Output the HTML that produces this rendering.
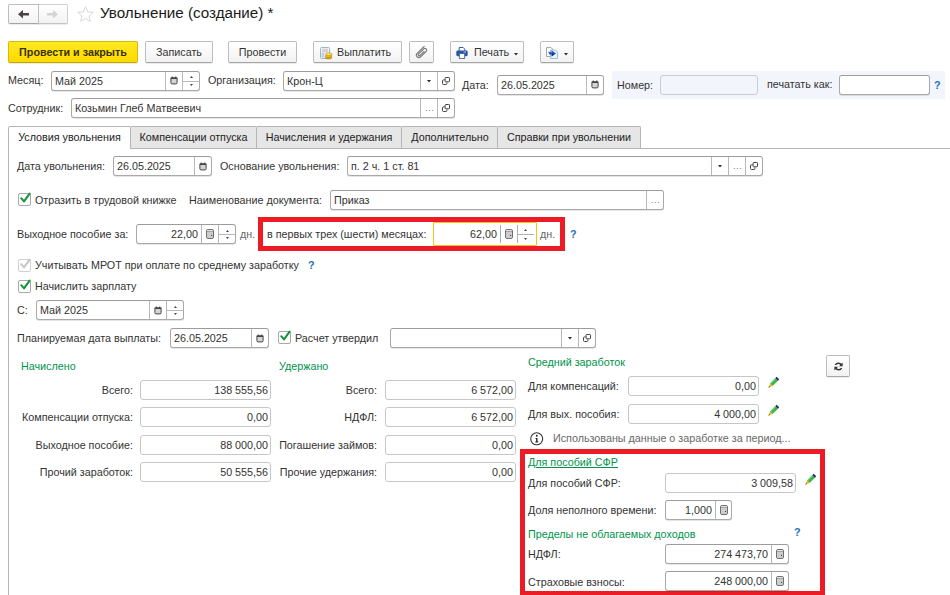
<!DOCTYPE html>
<html lang="ru">
<head>
<meta charset="utf-8">
<title>Увольнение (создание)</title>
<style>
html,body{margin:0;padding:0;background:#fff;}
body{width:950px;height:595px;overflow:hidden;position:relative;font-family:"Liberation Sans",sans-serif;font-size:10.75px;color:#333;}
.a{position:absolute;white-space:nowrap;}
.t{position:absolute;white-space:nowrap;line-height:13px;height:13px;}
.r{text-align:right;}
.g{color:#00934a;}
.q{color:#1f6fc2;font-weight:bold;margin-left:-1px;}
.f{position:absolute;box-sizing:border-box;border:1px solid #a9a9a9;border-top-color:#9c9c9c;border-radius:3px;background:#fff;height:20px;line-height:18px;white-space:nowrap;padding:0 3px;color:#333;box-shadow:0 1px 0 rgba(0,0,0,.10);}
.f.n{text-align:right;padding-right:2px;}
.f.dis{background:#f2f6fc;border-color:#c9cdd3;box-shadow:none;}
.f.ro{border-color:#c6c6c6;box-shadow:none;}
.f.act{border:1px solid #f5c400;box-shadow:0 0 0 1px #f5c400;}
.sep{position:absolute;top:0;bottom:0;width:1px;background:#b8b8b8;}
.hs{position:absolute;height:1px;background:#b8b8b8;}
.btn{position:absolute;box-sizing:border-box;height:21px;border:1px solid #bdbdbd;border-bottom-color:#a6a6a6;border-radius:2px;background:linear-gradient(#ffffff,#f2f2f2);box-shadow:0 1px 0 rgba(0,0,0,.08);line-height:19px;text-align:center;white-space:nowrap;color:#333;}
.btn.y{background:linear-gradient(#ffe920,#ffd900);border-color:#d9b900;border-bottom-color:#c3a600;font-weight:bold;color:#3a3000;}
.tab{position:absolute;box-sizing:border-box;top:126px;height:22px;border:1px solid #b5b5b5;border-bottom:none;border-left:none;background:#e6e6e6;line-height:20px;text-align:center;white-space:nowrap;border-radius:0 2px 0 0;color:#222;}
.tab.on{background:#fff;border-left:1px solid #b5b5b5;height:23px;border-radius:2px 2px 0 0;}
.cb{position:absolute;box-sizing:border-box;width:13px;height:13px;border:1px solid #a8a8a8;border-radius:2px;background:#fff;}
.cb.d{border-color:#d0d0d0;}
.red{position:absolute;box-sizing:border-box;border:5px solid #ed1c24;}
svg{position:absolute;overflow:visible;}
.dots{position:absolute;font-size:9px;line-height:10px;color:#777;letter-spacing:0.6px;}
</style>
</head>
<body>
<div class="btn " style="left:38px;top:4px;width:30px;height:20px;line-height:18px;border-color:#d0d0d0;border-bottom-color:#c4c4c4;border-radius:0 2px 2px 0;"></div>
<div class="btn " style="left:8px;top:4px;width:31px;height:20px;line-height:18px;border-radius:2px 0 0 2px;"></div>
<svg style="left:18px;top:10px" width="11" height="9" viewBox="0 0 11 9"><path d="M0 4.2L5 0V3H11V5.4H5V8.4z" fill="#4b4248"/></svg>
<svg style="left:47px;top:10px" width="11" height="9" viewBox="0 0 11 9"><path d="M11 4.2L6 0V3H0V5.4H6V8.4z" fill="#d4d4d4"/></svg>
<svg style="left:76px;top:4.5px" width="19" height="19" viewBox="0 0 16 16"><path d="M8 1.5l1.9 4.3 4.6.4-3.5 3.1 1.1 4.6L8 11.4l-4.1 2.5 1.1-4.6L1.5 6.2l4.6-.4z" fill="#fff" stroke="#d6d6d6" stroke-width="0.8" stroke-linejoin="round"/></svg>
<div class="a" style="left:100px;top:3px;font-size:15.2px;line-height:20px;color:#1a1a1a;">Увольнение (создание) *</div>
<div class="btn y" style="left:8px;top:41px;width:130px;height:22px;line-height:20px;">Провести и закрыть</div>
<div class="btn " style="left:145px;top:41px;width:68px;height:22px;line-height:20px;">Записать</div>
<div class="btn " style="left:228px;top:41px;width:69px;height:22px;line-height:20px;">Провести</div>
<div class="btn " style="left:313px;top:41px;width:89px;height:22px;line-height:20px;text-align:left;padding-left:23px;">Выплатить</div>
<div class="btn " style="left:409px;top:41px;width:25px;height:22px;line-height:20px;"></div>
<div class="btn " style="left:450px;top:41px;width:74px;height:22px;line-height:20px;text-align:left;padding-left:23px;">Печать</div>
<div class="btn " style="left:540px;top:41px;width:34px;height:22px;line-height:20px;"></div>
<svg style="left:320px;top:47px" width="13" height="13" viewBox="0 0 13 13"><rect x="0.5" y="0.5" width="9" height="11" rx="1" fill="#f2f6fb" stroke="#9db4cb" stroke-width="1"/><rect x="2" y="1.6" width="6" height="4" fill="#d4d4d4"/><rect x="1.6" y="6" width="2.6" height="4.6" fill="#b9cfe6"/><g stroke="#b07d0c" stroke-width="0.5"><ellipse cx="8.6" cy="10.6" rx="3.3" ry="1.5" fill="#dca616"/><ellipse cx="8.6" cy="9" rx="3.3" ry="1.5" fill="#ecbd28"/><ellipse cx="8.9" cy="7.3" rx="3.3" ry="1.5" fill="#f8d64e"/></g><ellipse cx="8.6" cy="7" rx="1.7" ry="0.6" fill="#fdf2b0"/></svg>
<svg style="left:415px;top:46px" width="13" height="13" viewBox="0 0 13 13"><g transform="rotate(45 6.5 6.5)" fill="none" stroke="#6f6f6f" stroke-width="1" stroke-linecap="round"><path d="M4 0.2V10.2a2.5 2.5 0 0 0 5 0V2.4a1.75 1.75 0 0 0 -3.5 0V9.8a1 1 0 0 0 2 0V3.8"/></g></svg>
<svg style="left:456px;top:47px" width="12" height="12" viewBox="0 0 12 12"><path d="M3.2 4V0.5H7.2L8.8 2.2V4" fill="#fff" stroke="#2f5c9e" stroke-width="1"/><rect x="0.3" y="3.6" width="11.4" height="5.6" rx="1.4" fill="#2a569a"/><rect x="7.6" y="4.6" width="2.4" height="0.9" fill="#cfe0f5"/><rect x="3.3" y="6.6" width="5.4" height="4.9" fill="#fff" stroke="#2f5c9e" stroke-width="0.8"/></svg>
<svg style="left:514px;top:53px" width="4" height="3" viewBox="0 0 4 3"><path d="M0 0H4L2 2.6z" fill="#2b2b2b"/></svg>
<svg style="left:546px;top:47px" width="12" height="12" viewBox="0 0 12 12"><path d="M0.5 0.5H5L6.5 2V9.5H0.5z" fill="#fff" stroke="#a9a9a9" stroke-width="1"/><path d="M4.5 3H9.5L11.5 5V11.5H4.5z" fill="#eaf3fb" stroke="#9fc0dc" stroke-width="1"/><path d="M2.2 4.4L5.6 5.4L5.4 3.2L10 6.6L5.6 9.6L5.8 7.4L3.4 7.6z" fill="#1c56b8"/><path d="M5.6 7.2L8.6 6.6L5.8 9.4z" fill="#0b2a6b"/></svg>
<svg style="left:564px;top:53px" width="4" height="3" viewBox="0 0 4 3"><path d="M0 0H4L2 2.6z" fill="#2b2b2b"/></svg>
<div class="a" style="left:612px;top:71px;width:333px;height:28px;background:#f2f6fc;"></div>
<div class="t " style="left:8px;top:74px;">Месяц:</div>
<div class="f " style="left:51px;top:71px;width:149px;height:20px;line-height:18px;">Май 2025</div>
<div class="sep a" style="left:165px;top:72px;height:18px;bottom:auto;"></div>
<svg style="left:170px;top:76px" width="8" height="9" viewBox="0 0 8 9"><rect x="0.9" y="1.9" width="6.2" height="6" rx="1.2" fill="#d4d4d4" stroke="#444" stroke-width="1"/><rect x="0.6" y="1.5" width="6.8" height="1.5" fill="#444"/><rect x="1.7" y="0.5" width="1.1" height="1.6" fill="#444"/><rect x="5.2" y="0.5" width="1.1" height="1.6" fill="#444"/></svg>
<div class="sep a" style="left:182px;top:72px;height:18px;bottom:auto;"></div>
<div class="hs" style="left:183px;top:81px;width:16px;"></div>
<svg style="left:190px;top:76px" width="3" height="2" viewBox="0 0 3 2"><path d="M0 2H3L1.5 0z" fill="#444"/></svg>
<svg style="left:190px;top:84px" width="3" height="2" viewBox="0 0 3 2"><path d="M0 0H3L1.5 2z" fill="#444"/></svg>
<div class="t " style="left:208px;top:74px;">Организация:</div>
<div class="f " style="left:283px;top:71px;width:172px;height:20px;line-height:18px;">Крон-Ц</div>
<div class="sep a" style="left:420px;top:72px;height:18px;bottom:auto;"></div>
<svg style="left:427px;top:80px" width="4" height="3" viewBox="0 0 4 3"><path d="M0 0H4L2 2.6z" fill="#2b2b2b"/></svg>
<div class="sep a" style="left:437px;top:72px;height:18px;bottom:auto;"></div>
<svg style="left:442px;top:77px" width="8" height="8" viewBox="0 0 8 8"><path d="M2.8 2.9H1.5Q0.5 2.9 0.5 3.9V6.5Q0.5 7.5 1.5 7.5H3.9Q4.9 7.5 4.9 6.5V5.4" fill="none" stroke="#444" stroke-width="1"/><rect x="3.1" y="0.5" width="4.4" height="4.3" rx="0.7" fill="#fff" stroke="#444" stroke-width="1"/></svg>
<div class="t " style="left:462px;top:79px;">Дата:</div>
<div class="f " style="left:497px;top:75px;width:107px;height:20px;line-height:18px;">26.05.2025</div>
<div class="sep a" style="left:586px;top:76px;height:18px;bottom:auto;"></div>
<svg style="left:591px;top:80px" width="8" height="9" viewBox="0 0 8 9"><rect x="0.9" y="1.9" width="6.2" height="6" rx="1.2" fill="#d4d4d4" stroke="#444" stroke-width="1"/><rect x="0.6" y="1.5" width="6.8" height="1.5" fill="#444"/><rect x="1.7" y="0.5" width="1.1" height="1.6" fill="#444"/><rect x="5.2" y="0.5" width="1.1" height="1.6" fill="#444"/></svg>
<div class="t " style="left:617px;top:79px;">Номер:</div>
<div class="f dis" style="left:660px;top:75px;width:98px;height:20px;line-height:18px;"></div>
<div class="t " style="left:767px;top:78px;">печатать как:</div>
<div class="f " style="left:839px;top:75px;width:91px;height:20px;line-height:18px;"></div>
<div class="t q" style="left:935px;top:79px;">?</div>
<div class="t " style="left:8px;top:102px;">Сотрудник:</div>
<div class="f " style="left:71px;top:98px;width:384px;height:20px;line-height:18px;">Козьмин Глеб Матвеевич</div>
<div class="sep a" style="left:420px;top:99px;height:18px;bottom:auto;"></div>
<div class="dots" style="left:425px;top:103px">...</div>
<div class="sep a" style="left:437px;top:99px;height:18px;bottom:auto;"></div>
<svg style="left:442px;top:104px" width="8" height="8" viewBox="0 0 8 8"><path d="M2.8 2.9H1.5Q0.5 2.9 0.5 3.9V6.5Q0.5 7.5 1.5 7.5H3.9Q4.9 7.5 4.9 6.5V5.4" fill="none" stroke="#444" stroke-width="1"/><rect x="3.1" y="0.5" width="4.4" height="4.3" rx="0.7" fill="#fff" stroke="#444" stroke-width="1"/></svg>
<div class="a" style="left:8px;top:148px;width:942px;height:1px;background:#b5b5b5;"></div>
<div class="a" style="left:8px;top:148px;width:1px;height:447px;background:#b5b5b5;"></div>
<div class="tab on" style="left:8px;width:123px;">Условия увольнения</div>
<div class="tab" style="left:131px;width:126px;">Компенсации отпуска</div>
<div class="tab" style="left:257px;width:145px;">Начисления и удержания</div>
<div class="tab" style="left:402px;width:96px;padding-left:1px;">Дополнительно</div>
<div class="tab" style="left:498px;width:143px;">Справки при увольнении</div>
<div class="t " style="left:17px;top:160px;">Дата увольнения:</div>
<div class="f " style="left:113px;top:156px;width:99px;height:20px;line-height:18px;">26.05.2025</div>
<div class="sep a" style="left:194px;top:157px;height:18px;bottom:auto;"></div>
<svg style="left:199px;top:162px" width="8" height="9" viewBox="0 0 8 9"><rect x="0.9" y="1.9" width="6.2" height="6" rx="1.2" fill="#d4d4d4" stroke="#444" stroke-width="1"/><rect x="0.6" y="1.5" width="6.8" height="1.5" fill="#444"/><rect x="1.7" y="0.5" width="1.1" height="1.6" fill="#444"/><rect x="5.2" y="0.5" width="1.1" height="1.6" fill="#444"/></svg>
<div class="t " style="left:220px;top:160px;">Основание увольнения:</div>
<div class="f " style="left:347px;top:156px;width:416px;height:20px;line-height:18px;">п. 2 ч. 1 ст. 81</div>
<div class="sep a" style="left:711px;top:157px;height:18px;bottom:auto;"></div>
<svg style="left:718px;top:165px" width="4" height="3" viewBox="0 0 4 3"><path d="M0 0H4L2 2.6z" fill="#2b2b2b"/></svg>
<div class="sep a" style="left:728px;top:157px;height:18px;bottom:auto;"></div>
<div class="dots" style="left:733px;top:161px">...</div>
<div class="sep a" style="left:745px;top:157px;height:18px;bottom:auto;"></div>
<svg style="left:750px;top:162px" width="8" height="8" viewBox="0 0 8 8"><path d="M2.8 2.9H1.5Q0.5 2.9 0.5 3.9V6.5Q0.5 7.5 1.5 7.5H3.9Q4.9 7.5 4.9 6.5V5.4" fill="none" stroke="#444" stroke-width="1"/><rect x="3.1" y="0.5" width="4.4" height="4.3" rx="0.7" fill="#fff" stroke="#444" stroke-width="1"/></svg>
<div class="cb " style="left:18px;top:193px;"></div>
<svg style="left:19px;top:192px" width="13" height="12" viewBox="0 0 13 12"><path d="M2.2 6.2L5 9.4L10.6 1.6" fill="none" stroke="#15933a" stroke-width="2" stroke-linecap="round" stroke-linejoin="round"/></svg>
<div class="t " style="left:35px;top:194px;">Отразить в трудовой книжке</div>
<div class="t " style="left:189px;top:194px;">Наименование документа:</div>
<div class="f " style="left:330px;top:190px;width:334px;height:20px;line-height:18px;">Приказ</div>
<div class="sep a" style="left:646px;top:191px;height:18px;bottom:auto;"></div>
<div class="dots" style="left:651px;top:195px">...</div>
<div class="t " style="left:17px;top:228px;">Выходное пособие за:</div>
<div class="f n" style="left:136px;top:224px;width:100px;height:20px;line-height:18px;padding-right:37px;">22,00</div>
<div class="sep a" style="left:201px;top:225px;height:18px;bottom:auto;"></div>
<svg style="left:206px;top:229px" width="8" height="10" viewBox="0 0 8 10"><rect x="0.5" y="0.5" width="7" height="9" rx="1.4" fill="#cdcdcd" stroke="#707070" stroke-width="1"/><rect x="1" y="2.2" width="6" height="0.7" fill="#8c8c8c"/><rect x="1.2" y="1.1" width="5.6" height="1" fill="#e6e6e6"/><rect x="5" y="5.9" width="1.1" height="1.1" fill="#4a4a4a"/></svg>
<div class="sep a" style="left:218px;top:225px;height:18px;bottom:auto;"></div>
<div class="hs" style="left:219px;top:234px;width:16px;"></div>
<svg style="left:226px;top:230px" width="3" height="2" viewBox="0 0 3 2"><path d="M0 2H3L1.5 0z" fill="#444"/></svg>
<svg style="left:226px;top:237px" width="3" height="2" viewBox="0 0 3 2"><path d="M0 0H3L1.5 2z" fill="#444"/></svg>
<div class="t " style="left:240px;top:228px;color:#666;">дн.</div>
<div class="red" style="left:258px;top:217px;width:307px;height:34px;"></div>
<div class="t " style="left:267px;top:228px;">в первых трех (шести) месяцах:</div>
<div class="a" style="left:433px;top:222px;width:104px;height:24px;box-sizing:border-box;border:1px solid #f6c21a;background:#fff;border-radius:1px;"></div>
<div class="t r" style="left:440px;top:228px;width:57px;">62,00</div>
<div class="a" style="left:500px;top:225px;width:1px;height:18px;background:#b0b0b0;"></div>
<div class="a" style="left:517px;top:225px;width:1px;height:18px;background:#b0b0b0;"></div>
<div class="a" style="left:518px;top:234px;width:16px;height:1px;background:#b0b0b0;"></div>
<svg style="left:505px;top:229px" width="8" height="10" viewBox="0 0 8 10"><rect x="0.5" y="0.5" width="7" height="9" rx="1.4" fill="#cdcdcd" stroke="#707070" stroke-width="1"/><rect x="1" y="2.2" width="6" height="0.7" fill="#8c8c8c"/><rect x="1.2" y="1.1" width="5.6" height="1" fill="#e6e6e6"/><rect x="5" y="5.9" width="1.1" height="1.1" fill="#4a4a4a"/></svg>
<svg style="left:524px;top:229px" width="3" height="2" viewBox="0 0 3 2"><path d="M0 2H3L1.5 0z" fill="#444"/></svg>
<svg style="left:524px;top:238px" width="3" height="2" viewBox="0 0 3 2"><path d="M0 0H3L1.5 2z" fill="#444"/></svg>
<div class="t " style="left:540px;top:228px;color:#666;">дн.</div>
<div class="t q" style="left:571px;top:228px;">?</div>
<div class="cb d" style="left:18px;top:259px;"></div>
<svg style="left:19px;top:258px" width="13" height="12" viewBox="0 0 13 12"><path d="M2.2 6.2L5 9.4L10.6 1.6" fill="none" stroke="#c6c6c6" stroke-width="2" stroke-linecap="round" stroke-linejoin="round"/></svg>
<div class="t " style="left:35px;top:259px;">Учитывать МРОТ при оплате по среднему заработку</div>
<div class="t q" style="left:309px;top:259px;">?</div>
<div class="cb " style="left:18px;top:280px;"></div>
<svg style="left:19px;top:279px" width="13" height="12" viewBox="0 0 13 12"><path d="M2.2 6.2L5 9.4L10.6 1.6" fill="none" stroke="#15933a" stroke-width="2" stroke-linecap="round" stroke-linejoin="round"/></svg>
<div class="t " style="left:35px;top:280px;">Начислить зарплату</div>
<div class="t " style="left:17px;top:304px;">С:</div>
<div class="f " style="left:36px;top:300px;width:148px;height:20px;line-height:18px;">Май 2025</div>
<div class="sep a" style="left:149px;top:301px;height:18px;bottom:auto;"></div>
<svg style="left:154px;top:306px" width="8" height="9" viewBox="0 0 8 9"><rect x="0.9" y="1.9" width="6.2" height="6" rx="1.2" fill="#d4d4d4" stroke="#444" stroke-width="1"/><rect x="0.6" y="1.5" width="6.8" height="1.5" fill="#444"/><rect x="1.7" y="0.5" width="1.1" height="1.6" fill="#444"/><rect x="5.2" y="0.5" width="1.1" height="1.6" fill="#444"/></svg>
<div class="sep a" style="left:166px;top:301px;height:18px;bottom:auto;"></div>
<div class="hs" style="left:167px;top:310px;width:16px;"></div>
<svg style="left:174px;top:306px" width="3" height="2" viewBox="0 0 3 2"><path d="M0 2H3L1.5 0z" fill="#444"/></svg>
<svg style="left:174px;top:313px" width="3" height="2" viewBox="0 0 3 2"><path d="M0 0H3L1.5 2z" fill="#444"/></svg>
<div class="t " style="left:17px;top:332px;">Планируемая дата выплаты:</div>
<div class="f " style="left:170px;top:328px;width:99px;height:20px;line-height:18px;">26.05.2025</div>
<div class="sep a" style="left:251px;top:329px;height:18px;bottom:auto;"></div>
<svg style="left:256px;top:334px" width="8" height="9" viewBox="0 0 8 9"><rect x="0.9" y="1.9" width="6.2" height="6" rx="1.2" fill="#d4d4d4" stroke="#444" stroke-width="1"/><rect x="0.6" y="1.5" width="6.8" height="1.5" fill="#444"/><rect x="1.7" y="0.5" width="1.1" height="1.6" fill="#444"/><rect x="5.2" y="0.5" width="1.1" height="1.6" fill="#444"/></svg>
<div class="cb " style="left:278px;top:331px;"></div>
<svg style="left:279px;top:330px" width="13" height="12" viewBox="0 0 13 12"><path d="M2.2 6.2L5 9.4L10.6 1.6" fill="none" stroke="#15933a" stroke-width="2" stroke-linecap="round" stroke-linejoin="round"/></svg>
<div class="t " style="left:295px;top:332px;">Расчет утвердил</div>
<div class="f " style="left:390px;top:328px;width:206px;height:20px;line-height:18px;"></div>
<div class="sep a" style="left:561px;top:329px;height:18px;bottom:auto;"></div>
<svg style="left:568px;top:337px" width="4" height="3" viewBox="0 0 4 3"><path d="M0 0H4L2 2.6z" fill="#2b2b2b"/></svg>
<div class="sep a" style="left:578px;top:329px;height:18px;bottom:auto;"></div>
<svg style="left:583px;top:334px" width="8" height="8" viewBox="0 0 8 8"><path d="M2.8 2.9H1.5Q0.5 2.9 0.5 3.9V6.5Q0.5 7.5 1.5 7.5H3.9Q4.9 7.5 4.9 6.5V5.4" fill="none" stroke="#444" stroke-width="1"/><rect x="3.1" y="0.5" width="4.4" height="4.3" rx="0.7" fill="#fff" stroke="#444" stroke-width="1"/></svg>
<div class="t g" style="left:21px;top:360px;">Начислено</div>
<div class="t g" style="left:279px;top:360px;">Удержано</div>
<div class="t g" style="left:528px;top:356px;">Средний заработок</div>
<div class="btn " style="left:826px;top:355px;width:24px;height:22px;line-height:20px;"></div>
<div class="t r" style="left:0px;top:384px;width:133px;">Всего:</div>
<div class="f n ro" style="left:140px;top:380px;width:131px;height:20px;line-height:18px;">138 555,56</div>
<div class="t r" style="left:0px;top:411px;width:133px;">Компенсации отпуска:</div>
<div class="f n ro" style="left:140px;top:407px;width:131px;height:20px;line-height:18px;">0,00</div>
<div class="t r" style="left:0px;top:439px;width:133px;">Выходное пособие:</div>
<div class="f n ro" style="left:140px;top:435px;width:131px;height:20px;line-height:18px;">88 000,00</div>
<div class="t r" style="left:0px;top:466px;width:133px;">Прочий заработок:</div>
<div class="f n ro" style="left:140px;top:462px;width:131px;height:20px;line-height:18px;">50 555,56</div>
<div class="t r" style="left:200px;top:384px;width:177px;">Всего:</div>
<div class="f n ro" style="left:385px;top:380px;width:131px;height:20px;line-height:18px;">6 572,00</div>
<div class="t r" style="left:200px;top:411px;width:177px;">НДФЛ:</div>
<div class="f n ro" style="left:385px;top:407px;width:131px;height:20px;line-height:18px;">6 572,00</div>
<div class="t r" style="left:200px;top:439px;width:177px;">Погашение займов:</div>
<div class="f n ro" style="left:385px;top:435px;width:131px;height:20px;line-height:18px;">0,00</div>
<div class="t r" style="left:200px;top:466px;width:177px;">Прочие удержания:</div>
<div class="f n ro" style="left:385px;top:462px;width:131px;height:20px;line-height:18px;">0,00</div>
<div class="t " style="left:528px;top:380px;">Для компенсаций:</div>
<div class="f n ro" style="left:628px;top:376px;width:131px;height:20px;line-height:18px;">0,00</div>
<div class="t " style="left:528px;top:408px;">Для вых. пособия:</div>
<div class="f n ro" style="left:628px;top:404px;width:131px;height:20px;line-height:18px;">4 000,00</div>
<svg style="left:767px;top:377px" width="12" height="12" viewBox="0 0 12 12"><g transform="rotate(45 6 6)"><rect x="4.2" y="-1" width="3.6" height="2.2" fill="#1f2f6b"/><rect x="4.2" y="1.2" width="3.6" height="7.2" fill="#3db54a"/><rect x="4.2" y="1.2" width="1.1" height="7.2" fill="#6fd07a"/><path d="M4.2 8.4H7.8L6 12.4z" fill="#f4b41f"/><path d="M5.3 10.8H6.7L6 12.6z" fill="#7a4a12"/></g></svg>
<svg style="left:767px;top:405px" width="12" height="12" viewBox="0 0 12 12"><g transform="rotate(45 6 6)"><rect x="4.2" y="-1" width="3.6" height="2.2" fill="#1f2f6b"/><rect x="4.2" y="1.2" width="3.6" height="7.2" fill="#3db54a"/><rect x="4.2" y="1.2" width="1.1" height="7.2" fill="#6fd07a"/><path d="M4.2 8.4H7.8L6 12.4z" fill="#f4b41f"/><path d="M5.3 10.8H6.7L6 12.6z" fill="#7a4a12"/></g></svg>
<svg style="left:804px;top:474px" width="12" height="12" viewBox="0 0 12 12"><g transform="rotate(45 6 6)"><rect x="4.2" y="-1" width="3.6" height="2.2" fill="#1f2f6b"/><rect x="4.2" y="1.2" width="3.6" height="7.2" fill="#3db54a"/><rect x="4.2" y="1.2" width="1.1" height="7.2" fill="#6fd07a"/><path d="M4.2 8.4H7.8L6 12.4z" fill="#f4b41f"/><path d="M5.3 10.8H6.7L6 12.6z" fill="#7a4a12"/></g></svg>
<svg style="left:530px;top:432px" width="14" height="14" viewBox="0 0 14 14"><circle cx="6.7" cy="6.8" r="6" fill="#fff" stroke="#333" stroke-width="1.1"/><circle cx="6.8" cy="3.8" r="0.95" fill="#222"/><path d="M5.4 5.9H7.5V9.6H8.3V10.4H5.3V9.6H6.1V6.7H5.4z" fill="#222"/></svg>
<svg style="left:834px;top:362px" width="9" height="9" viewBox="0 0 9 9"><path d="M7.6 3.4A3.4 3.4 0 0 0 1.4 3" fill="none" stroke="#333" stroke-width="1.5"/><path d="M8.6 0.6V4.2H5z" fill="#333"/><path d="M1.4 5.6A3.4 3.4 0 0 0 7.6 6" fill="none" stroke="#333" stroke-width="1.5"/><path d="M0.4 8.4V4.8H4z" fill="#333"/></svg>
<div class="t " style="left:553px;top:432px;color:#686868;">Использованы данные о заработке за период...</div>
<div class="red" style="left:520px;top:449px;width:305px;height:147px;"></div>
<div class="t g" style="left:528px;top:456px;text-decoration:underline;">Для пособий СФР</div>
<div class="t " style="left:528px;top:477px;">Для пособий СФР:</div>
<div class="f n ro" style="left:665px;top:473px;width:131px;height:20px;line-height:18px;">3 009,58</div>
<div class="t " style="left:528px;top:504px;">Доля неполного времени:</div>
<div class="f n" style="left:665px;top:500px;width:67px;height:20px;line-height:18px;padding-right:19px;">1,000</div>
<div class="sep a" style="left:715px;top:501px;height:18px;bottom:auto;"></div>
<svg style="left:720px;top:505px" width="8" height="10" viewBox="0 0 8 10"><rect x="0.5" y="0.5" width="7" height="9" rx="1.4" fill="#cdcdcd" stroke="#707070" stroke-width="1"/><rect x="1" y="2.2" width="6" height="0.7" fill="#8c8c8c"/><rect x="1.2" y="1.1" width="5.6" height="1" fill="#e6e6e6"/><rect x="5" y="5.9" width="1.1" height="1.1" fill="#4a4a4a"/></svg>
<div class="t g" style="left:528px;top:528px;">Пределы не облагаемых доходов</div>
<div class="t q" style="left:795px;top:526px;">?</div>
<div class="t " style="left:528px;top:548px;">НДФЛ:</div>
<div class="f n" style="left:665px;top:544px;width:124px;height:20px;line-height:18px;padding-right:20px;">274 473,70</div>
<div class="sep a" style="left:771px;top:545px;height:18px;bottom:auto;"></div>
<svg style="left:776px;top:549px" width="8" height="10" viewBox="0 0 8 10"><rect x="0.5" y="0.5" width="7" height="9" rx="1.4" fill="#cdcdcd" stroke="#707070" stroke-width="1"/><rect x="1" y="2.2" width="6" height="0.7" fill="#8c8c8c"/><rect x="1.2" y="1.1" width="5.6" height="1" fill="#e6e6e6"/><rect x="5" y="5.9" width="1.1" height="1.1" fill="#4a4a4a"/></svg>
<div class="t " style="left:528px;top:576px;">Страховые взносы:</div>
<div class="f n" style="left:665px;top:571px;width:124px;height:20px;line-height:18px;padding-right:20px;">248 000,00</div>
<div class="sep a" style="left:771px;top:572px;height:18px;bottom:auto;"></div>
<svg style="left:776px;top:576px" width="8" height="10" viewBox="0 0 8 10"><rect x="0.5" y="0.5" width="7" height="9" rx="1.4" fill="#cdcdcd" stroke="#707070" stroke-width="1"/><rect x="1" y="2.2" width="6" height="0.7" fill="#8c8c8c"/><rect x="1.2" y="1.1" width="5.6" height="1" fill="#e6e6e6"/><rect x="5" y="5.9" width="1.1" height="1.1" fill="#4a4a4a"/></svg>
</body>
</html>
